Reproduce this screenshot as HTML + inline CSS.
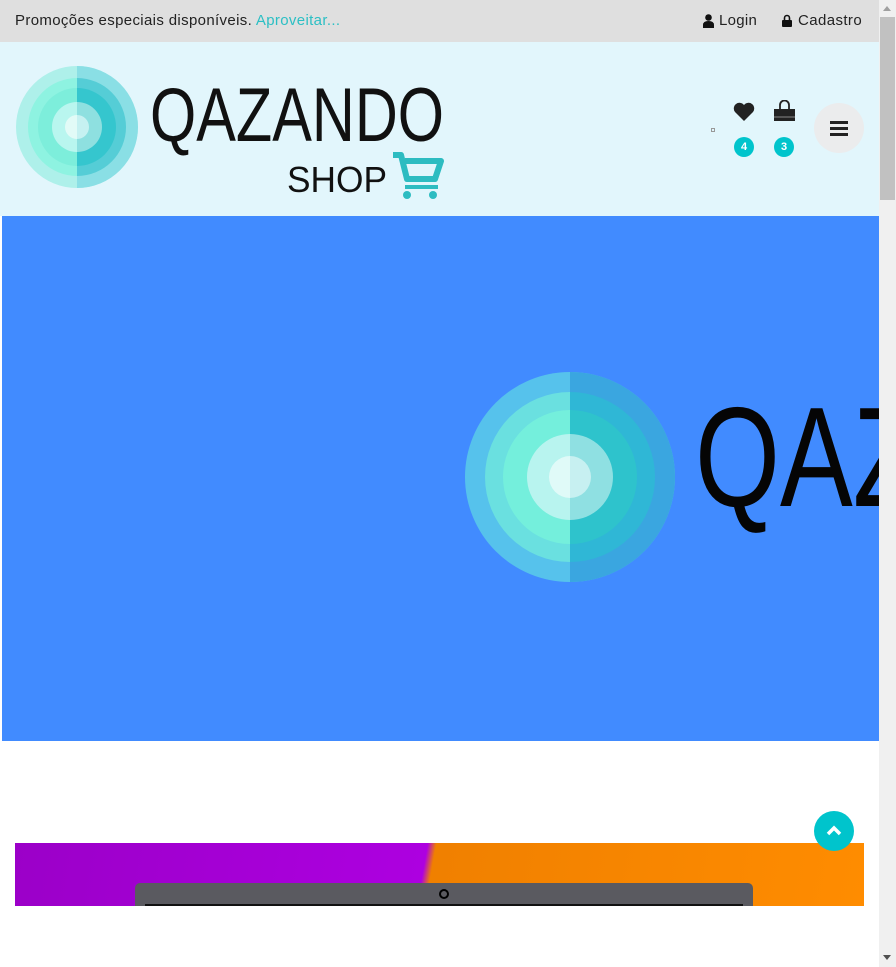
<!DOCTYPE html>
<html><head><meta charset="utf-8"><style>
body{margin:0;width:896px;height:967px;overflow:hidden;background:#fff;font-family:"Liberation Sans",sans-serif;position:relative}
.top{position:absolute;left:0;top:0;width:879px;height:42px;background:#dfdfdf;font-size:15px;color:#222}
.top .l{position:absolute;left:15px;top:12px;letter-spacing:0.35px}
.top .l span{color:#2bbfc4}
.hdr{position:absolute;left:0;top:42px;width:879px;height:174px;background:#e2f6fc}
.ban{position:absolute;left:2px;top:216px;width:877px;height:525px;background:#418bff;overflow:hidden}
.badge{position:absolute;width:20px;height:20px;border-radius:50%;background:#00c4cc;color:#fff;font-size:11px;font-weight:bold;text-align:center;line-height:20px}
.sb{position:absolute;left:879px;top:0;width:17px;height:967px;background:#f0f0f0}
</style></head><body>
<div class="top"><div class="l">Promoções especiais disponíveis. <span>Aproveitar...</span></div>
<svg style="position:absolute;left:703px;top:14px" width="11" height="14" viewBox="0 0 11 14"><circle cx="5.5" cy="3.5" r="3.3" fill="#111"/><path d="M0 14v-3q0-4 5.5-4t5.5 4v3z" fill="#111"/></svg>
<span style="position:absolute;left:719px;top:12px;letter-spacing:0.3px">Login</span>
<svg style="position:absolute;left:782px;top:14px" width="10" height="13" viewBox="0 0 10 13"><path d="M2.5 6V4a2.5 2.5 0 015 0v2" stroke="#111" stroke-width="1.6" fill="none"/><rect x="0" y="6" width="10" height="7" rx="1" fill="#111"/></svg>
<span style="position:absolute;left:798px;top:12px;letter-spacing:0.4px">Cadastro</span></div>
<div class="hdr">
<svg width="460" height="174" style="position:absolute;left:0;top:0">
<defs><clipPath id="r1"><rect x="77" y="0" width="100" height="174"/></clipPath></defs>
<g><circle cx="77" cy="85" r="61" fill="#aef0ea"/><circle cx="77" cy="85" r="49" fill="#8ef3e1"/><circle cx="77" cy="85" r="39" fill="#7deedb"/><circle cx="77" cy="85" r="25" fill="#b9f6ef"/><circle cx="77" cy="85" r="12" fill="#e2fbf7"/></g>
<g clip-path="url(#r1)"><circle cx="77" cy="85" r="61" fill="#8adfe5"/><circle cx="77" cy="85" r="49" fill="#55cdd6"/><circle cx="77" cy="85" r="39" fill="#35c6ce"/><circle cx="77" cy="85" r="25" fill="#8ee0e0"/><circle cx="77" cy="85" r="12" fill="#c6f1f1"/></g>
<text x="150" y="99" font-family="Liberation Sans Narrow, Liberation Sans, sans-serif" font-size="76" textLength="294" lengthAdjust="spacingAndGlyphs" fill="#111">QAZANDO</text>
<text x="287" y="150" font-family="Liberation Sans, sans-serif" font-size="36" textLength="100" lengthAdjust="spacingAndGlyphs" fill="#111">SHOP</text>
<path d="M393 113h8l6 24h28l6-18h-36" fill="none" stroke="#2dbcc1" stroke-width="6" stroke-linejoin="round"/><path d="M405 145h33" stroke="#2dbcc1" stroke-width="4"/><circle cx="407" cy="153" r="4" fill="#2dbcc1"/><circle cx="433" cy="153" r="4" fill="#2dbcc1"/>
</svg>
<div style="position:absolute;left:711px;top:86px;width:2px;height:2px;border:1px solid #999"></div>
<svg style="position:absolute;left:733px;top:60px" width="22" height="20" viewBox="0 0 22 20"><path d="M11 19L2 10A5.5 5.5 0 0111 3a5.5 5.5 0 019 7z" fill="#222"/></svg>
<svg style="position:absolute;left:773px;top:58px" width="23" height="22" viewBox="0 0 23 22"><path d="M7 9V5a4.5 4.5 0 019 0v4" stroke="#222" stroke-width="1.8" fill="none"/><path d="M1 9h21v12H1z" fill="#222"/><path d="M1 17h21" stroke="#888" stroke-width="1"/></svg>
<div class="badge" style="left:734px;top:95px">4</div><div class="badge" style="left:774px;top:95px">3</div>
<div style="position:absolute;left:814px;top:61px;width:50px;height:50px;border-radius:50%;background:#ebeced"></div>
<div style="position:absolute;left:830px;top:79px;width:18px;height:3px;background:#222;box-shadow:0 6px 0 #222,0 12px 0 #222"></div>
</div>
<div class="ban"><svg width="877" height="525" style="position:absolute;left:0;top:0">
<defs><clipPath id="r2"><rect x="568" y="0" width="200" height="525"/></clipPath></defs>
<circle cx="568" cy="261" r="105" fill="#56c2ec"/><circle cx="568" cy="261" r="85" fill="#6ae0e0"/><circle cx="568" cy="261" r="67" fill="#74efdc"/><circle cx="568" cy="261" r="43" fill="#b8f4ef"/><circle cx="568" cy="261" r="21" fill="#e0faf8"/>
<g clip-path="url(#r2)"><circle cx="568" cy="261" r="105" fill="#3aa6e0"/><circle cx="568" cy="261" r="85" fill="#2fb7d6"/><circle cx="568" cy="261" r="67" fill="#2ec3cc"/><circle cx="568" cy="261" r="43" fill="#8fe0e2"/><circle cx="568" cy="261" r="21" fill="#c7f0f1"/></g>
<text x="693" y="290" font-family="Liberation Sans Narrow, Liberation Sans, sans-serif" font-size="142" textLength="540" lengthAdjust="spacingAndGlyphs" fill="#050505">QAZANDO</text>
</svg></div>
<div style="position:absolute;left:15px;top:843px;width:849px;height:63px;overflow:hidden;background:linear-gradient(100deg,#9b00c8 0,#ad00e0 48%,#f08000 49%,#ff8c00 100%)">
<div style="position:absolute;left:120px;top:40px;width:618px;height:40px;background:#5a5a60;border-radius:5px"></div>
<div style="position:absolute;left:130px;top:61px;width:598px;height:10px;background:#111"></div>
<div style="position:absolute;left:424px;top:46px;width:6px;height:6px;border:2px solid #000;border-radius:50%"></div></div>
<div style="position:absolute;left:814px;top:811px;width:40px;height:40px;border-radius:50%;background:#00c4cc"></div>
<svg style="position:absolute;left:826px;top:823px" width="16" height="14"><path d="M2 11l6-6 6 6" stroke="#fff" stroke-width="3.5" fill="none"/></svg>
<div class="sb"><div style="position:absolute;left:1px;top:17px;width:15px;height:183px;background:#c1c1c1"></div>
<div style="position:absolute;left:4px;top:6px;border:4px solid transparent;border-bottom:5px solid #a0a0a0;border-top:0"></div>
<div style="position:absolute;left:4px;top:955px;border:4px solid transparent;border-top:5px solid #505050;border-bottom:0"></div></div>
</body></html>
